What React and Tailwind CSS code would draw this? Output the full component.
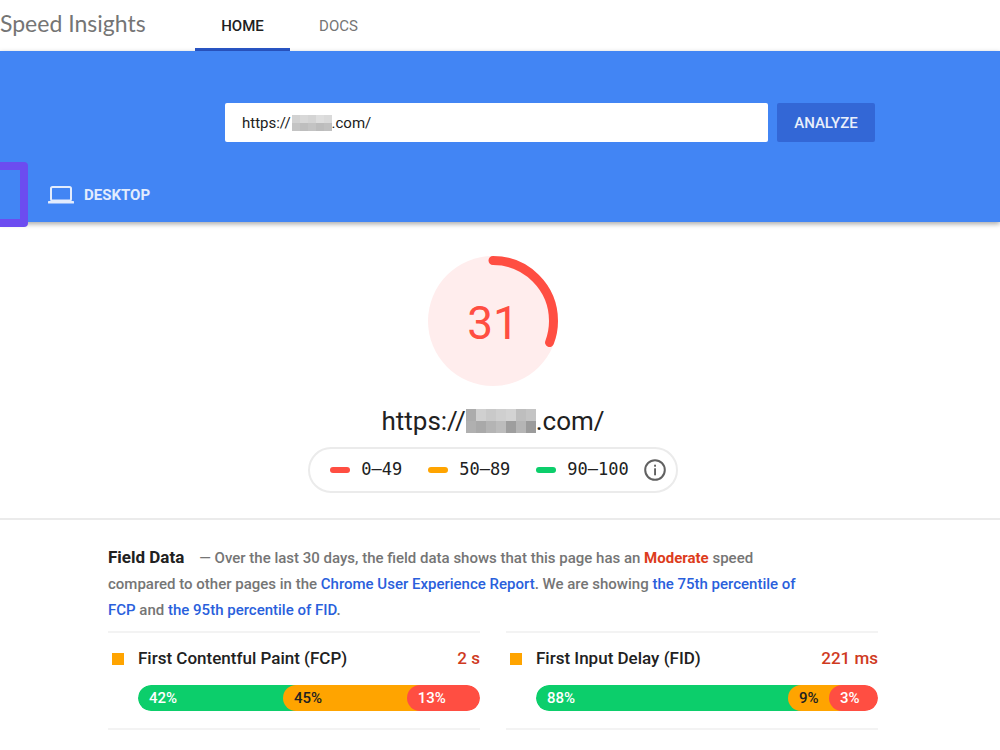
import React, { useState } from 'react';

const SCORE = 31;

const scoreRanges = [
  { label: '0–49', color: 'bg-[#ff4e42]' },
  { label: '50–89', color: 'bg-[#ffa400]' },
  { label: '90–100', color: 'bg-[#0cce6b]' }
];

// share is the drawn width of a segment; small values keep room for their label
const metrics = [
  {
    id: 'fcp',
    name: 'First Contentful Paint (FCP)',
    value: '2 s',
    segments: [
      { label: '42%', share: 42.4, style: 'bg-[#0cce6b] text-white' },
      { label: '45%', share: 36.2, style: 'bg-[#ffa400] text-[#212121]' },
      { label: '13%', share: 21.4, style: 'bg-[#ff4e42] text-white' }
    ]
  },
  {
    id: 'fid',
    name: 'First Input Delay (FID)',
    value: '221 ms',
    segments: [
      { label: '88%', share: 73.7, style: 'bg-[#0cce6b] text-white' },
      { label: '9%', share: 12, style: 'bg-[#ffa400] text-[#212121]' },
      { label: '3%', share: 14.3, style: 'bg-[#ff4e42] text-white' }
    ]
  }
];

const LaptopIcon = () => (
  <svg width="26" height="18" viewBox="0 0 26 18" fill="none" aria-hidden="true">
    <rect x="3" y="1" width="20" height="13.5" rx="1.5" stroke="#e3ecfd" strokeWidth="2" />
    <rect x="0" y="15" width="26" height="2.6" rx="0.6" fill="#e3ecfd" />
  </svg>
);

const InfoIcon = () => (
  <svg width="22" height="22" viewBox="0 0 22 22" fill="none" aria-hidden="true">
    <circle cx="11" cy="11" r="9.8" stroke="#616161" strokeWidth="2" />
    <rect x="10.1" y="9.3" width="1.9" height="7" fill="#616161" />
    <rect x="10.1" y="5.7" width="1.9" height="2" fill="#616161" />
  </svg>
);

// Mosaic that hides the domain name
const Mosaic = ({ className, tiles, columns }) => (
  <span className={`grid overflow-hidden ${columns} ${className}`} aria-hidden="true">
    {tiles.map((tile, i) => (
      <span key={i} className={tile}></span>
    ))}
  </span>
);

const smallTiles = [
  'bg-[#d2d2d2]', 'bg-[#d8d8d8]', 'bg-[#d4d4d4]', 'bg-[#dedede]', 'bg-[#dadada]',
  'bg-[#c4c4c4]', 'bg-[#bebebe]', 'bg-[#c3c3c3]', 'bg-[#bcbcbc]', 'bg-[#c0c0c0]'
];

const largeTiles = [
  'bg-[#acacac]', 'bg-[#d0d0d0]', 'bg-[#c9c9c9]', 'bg-[#cfcfcf]', 'bg-[#d3d3d3]', 'bg-[#bebebe]', 'bg-[#c4c4c4]',
  'bg-[#b0b0b0]', 'bg-[#a9a9a9]', 'bg-[#b4b4b4]', 'bg-[#bcbcbc]', 'bg-[#9e9e9e]', 'bg-[#b5b5b5]', 'bg-[#9b9b9b]'
];

const Gauge = ({ score }) => {
  const circumference = 2 * Math.PI * 60;
  return (
    <div className="relative flex h-[130px] w-[130px] items-center justify-center rounded-full bg-[#ffeded] pt-1">
      <svg className="absolute inset-0" viewBox="0 0 130 130" aria-hidden="true">
        <circle
          cx="65"
          cy="65"
          r="60.5"
          fill="none"
          stroke="#ff4e42"
          strokeWidth="9"
          strokeLinecap="round"
          strokeDasharray={`${(score / 100) * circumference} 500`}
          transform="rotate(-90 65 65)"
        />
      </svg>
      <span className="text-[46px] leading-[52px] text-[#ff4e42]">{score}</span>
    </div>
  );
};

const Metric = ({ metric }) => (
  <div className="border-y-2 border-[#f3f3f3] pt-[13px] pb-[17px]">
    <div className="flex h-[26px] items-center">
      <span className="ml-1 h-3 w-3 bg-[#ffa400]"></span>
      <h3 className="ml-[14px] flex-1 text-[17px] font-medium text-[#212121]">{metric.name}</h3>
      <span className="text-[17px] font-medium text-[#cf3a1e]">{metric.value}</span>
    </div>
    <div className="mt-[13px] ml-[30px] flex h-[26px] overflow-hidden rounded-full">
      {metric.segments.map((segment, i) => (
        <div
          key={segment.label}
          className="min-w-0"
          style={{ width: `${segment.share}%` }}
        >
          {/* each colour runs on under the round start of the next one */}
          <div
            className={`h-[26px] rounded-l-full pl-[11px] text-[15px] leading-[26px] font-medium ${segment.style} ${
              i < metric.segments.length - 1 ? '-mr-[13px]' : 'rounded-r-full'
            }`}
          >
            {segment.label}
          </div>
        </div>
      ))}
    </div>
  </div>
);

const App = () => {
  const [url, setUrl] = useState(`https://${'\u00a0'.repeat(11)}.com/`);

  return (
    <div className="min-h-screen overflow-x-hidden bg-white font-['Roboto',sans-serif] text-[#212121]">
      <header className="flex h-[51px] items-stretch">
        <div className="flex w-[195px] items-center pb-1 text-[23px] text-[#757575] font-['Lato','Roboto',sans-serif]">
          Speed Insights
        </div>
        <nav className="flex text-[15px] font-medium">
          <a href="#home" className="flex w-[95px] items-center justify-center border-b-3 border-[#2a56c6] pt-1 text-[#212121]">
            HOME
          </a>
          <a href="#docs" className="flex w-[97px] items-center justify-center pt-px font-normal text-[#757575]">
            DOCS
          </a>
        </nav>
      </header>

      <section className="relative bg-[#4285f4] pt-[52px] pb-[14px] shadow-[0_2px_5px_rgba(0,0,0,0.35)]">
        <form className="flex gap-[9px] pr-[125px] pl-[225px]" onSubmit={(e) => e.preventDefault()}>
          <div className="relative flex-1">
            <input
              type="text"
              aria-label="Web page URL"
              value={url}
              onChange={(e) => setUrl(e.target.value)}
              className="h-[39px] w-full rounded-xs bg-white px-[17px] text-[15px] text-[#212121] outline-none"
            />
            <Mosaic className="absolute top-[12px] left-[67px] h-4 w-10" columns="grid-cols-5" tiles={smallTiles} />
          </div>
          <button type="submit" className="h-[39px] w-[98px] rounded-xs bg-[#3367d6] pt-px text-[15px] font-medium text-[#e9effb]">
            ANALYZE
          </button>
        </form>

        <button type="button" className="mt-[40px] ml-12 flex h-[26px] items-center gap-[10px] text-[15px] font-bold text-[#e3ecfd]">
          <LaptopIcon />
          DESKTOP
        </button>

        <div className="pointer-events-none absolute top-[111px] -left-[100px] h-[65px] w-[128px] rounded-sm border-8 border-[#6c4cf0]"></div>
      </section>

      <section className="flex flex-col items-center border-b-2 border-[#ebebeb] pt-[34px] pr-[14px] pb-[25px]">
        <Gauge score={SCORE} />
        <h1 className="mt-[18px] flex h-[34px] items-center text-[26px]">
          https://
          <Mosaic className="h-6 w-[70px]" columns="grid-cols-7" tiles={largeTiles} />
          .com/
        </h1>
        <div className="mt-[9px] flex h-[46px] items-center rounded-full border-2 border-[#ebebeb] pr-[10px] pl-5">
          <ul className="flex gap-[26px]">
            {scoreRanges.map((range) => (
              <li key={range.label} className="flex items-center gap-[11px] text-[17px] font-['DejaVu_Sans_Mono',monospace]">
                <span className={`h-[6px] w-5 rounded-full ${range.color}`}></span>
                {range.label}
              </li>
            ))}
          </ul>
          <button type="button" aria-label="About the score" className="ml-[15px]">
            <InfoIcon />
          </button>
        </div>
      </section>

      <main className="pt-6 pr-[122px] pl-[108px]">
        <p className="max-w-[715px] text-[15px] leading-[26px] font-medium text-[#757575]">
          <strong className="mr-[15px] text-[17px] leading-[26px] font-bold text-[#212121]">Field Data</strong>
          — Over the last 30 days, the field data shows that this page has an{' '}
          <strong className="font-bold text-[#dd3c1c]">Moderate</strong> speed compared to other pages in the{' '}
          <a href="#crux" className="text-[#2a5fdc]">Chrome User Experience Report</a>. We are showing{' '}
          <a href="#fcp" className="text-[#2a5fdc]">the 75th percentile of FCP</a> and{' '}
          <a href="#fid" className="text-[#2a5fdc]">the 95th percentile of FID</a>.
        </p>
        <div className="mt-2 grid grid-cols-2 gap-[26px]">
          {metrics.map((metric) => (
            <Metric key={metric.id} metric={metric} />
          ))}
        </div>
      </main>
    </div>
  );
};

export default App;
